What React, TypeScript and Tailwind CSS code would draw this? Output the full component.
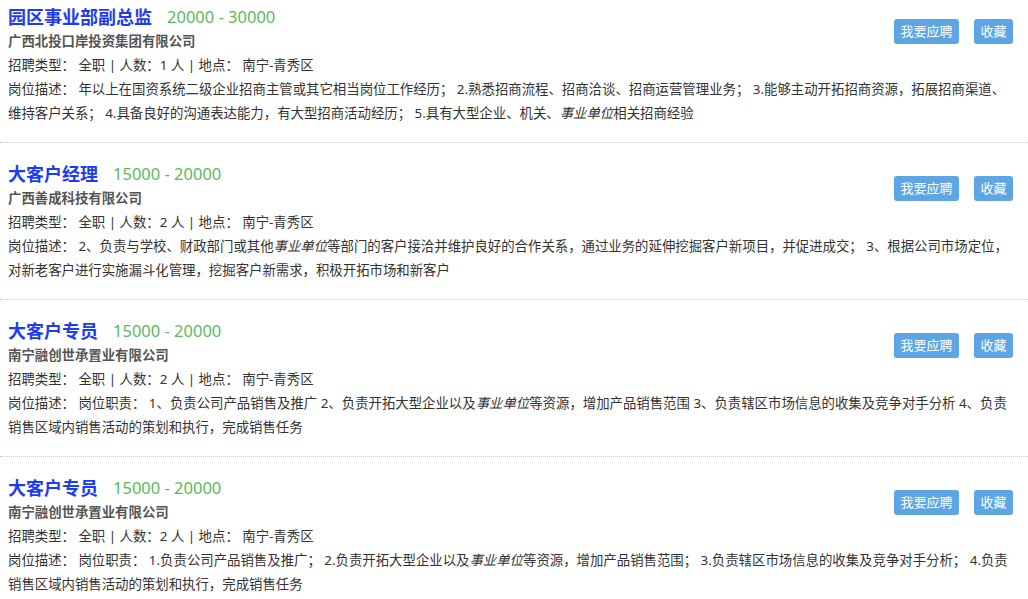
import React from "react";

type Part = string | { em: string };

interface Job {
  title: string;
  salary: string;
  company: string;
  count: number;
  desc: Part[];
}

const jobs: Job[] = [
  {
    title: "园区事业部副总监",
    salary: "20000 - 30000",
    company: "广西北投口岸投资集团有限公司",
    count: 1,
    desc: [
      "年以上在国资系统二级企业招商主管或其它相当岗位工作经历； 2.熟悉招商流程、招商洽谈、招商运营管理业务； 3.能够主动开拓招商资源，拓展招商渠道、维持客户关系； 4.具备良好的沟通表达能力，有大型招商活动经历； 5.具有大型企业、机关、",
      { em: "事业单位" },
      "相关招商经验",
    ],
  },
  {
    title: "大客户经理",
    salary: "15000 - 20000",
    company: "广西善成科技有限公司",
    count: 2,
    desc: [
      "2、负责与学校、财政部门或其他",
      { em: "事业单位" },
      "等部门的客户接洽并维护良好的合作关系，通过业务的延伸挖掘客户新项目，并促进成交； 3、根据公司市场定位，对新老客户进行实施漏斗化管理，挖掘客户新需求，积极开拓市场和新客户",
    ],
  },
  {
    title: "大客户专员",
    salary: "15000 - 20000",
    company: "南宁融创世承置业有限公司",
    count: 2,
    desc: [
      "岗位职责： 1、负责公司产品销售及推广 2、负责开拓大型企业以及",
      { em: "事业单位" },
      "等资源，增加产品销售范围 3、负责辖区市场信息的收集及竞争对手分析 4、负责销售区域内销售活动的策划和执行，完成销售任务",
    ],
  },
  {
    title: "大客户专员",
    salary: "15000 - 20000",
    company: "南宁融创世承置业有限公司",
    count: 2,
    desc: [
      "岗位职责： 1.负责公司产品销售及推广； 2.负责开拓大型企业以及",
      { em: "事业单位" },
      "等资源，增加产品销售范围； 3.负责辖区市场信息的收集及竞争对手分析； 4.负责销售区域内销售活动的策划和执行，完成销售任务",
    ],
  },
];

export default function App() {
  return (
    <div
      className="w-[1028px] bg-white text-[13.4px] leading-[24px] text-[#333]"
      style={{ fontFamily: '"Noto Sans", "Noto Sans CJK SC", sans-serif' }}
    >
      {jobs.map((job, i) => (
        <div
          key={i}
          className={`border-b border-dotted border-[#c8c8c8] pl-[8px] pr-[11px] pb-[17px] ${
            i === 0 ? "pt-[5px]" : "pt-[19px]"
          }`}
        >
          <div className="flex items-start justify-between">
            <div>
              <div className="flex items-center h-[24px]">
                <span className="text-[18px] font-bold text-[#1d3cf2]">{job.title}</span>
                <span className="ml-[15px] text-[16.5px] text-[#5cb85c]">{job.salary}</span>
              </div>
              <div className="font-bold text-[#555]">{job.company}</div>
            </div>
            <div className="mt-[14px] mr-[4px] flex gap-[15px]">
              <button className="h-[25px] w-[65px] rounded-[3px] bg-[#5ea5e3] text-[13px] leading-[25px] text-white">
                我要应聘
              </button>
              <button className="h-[25px] w-[39px] rounded-[3px] bg-[#5ea5e3] text-[13px] leading-[25px] text-white">
                收藏
              </button>
            </div>
          </div>
          <div>
            招聘类型： 全职 | 人数：{job.count} 人 | 地点： 南宁-青秀区
          </div>
          <div>
            岗位描述： {job.desc.map((p, j) =>
              typeof p === "string" ? (
                <React.Fragment key={j}>{p}</React.Fragment>
              ) : (
                <em key={j} className="italic">
                  {p.em}
                </em>
              )
            )}
          </div>
        </div>
      ))}
    </div>
  );
}
